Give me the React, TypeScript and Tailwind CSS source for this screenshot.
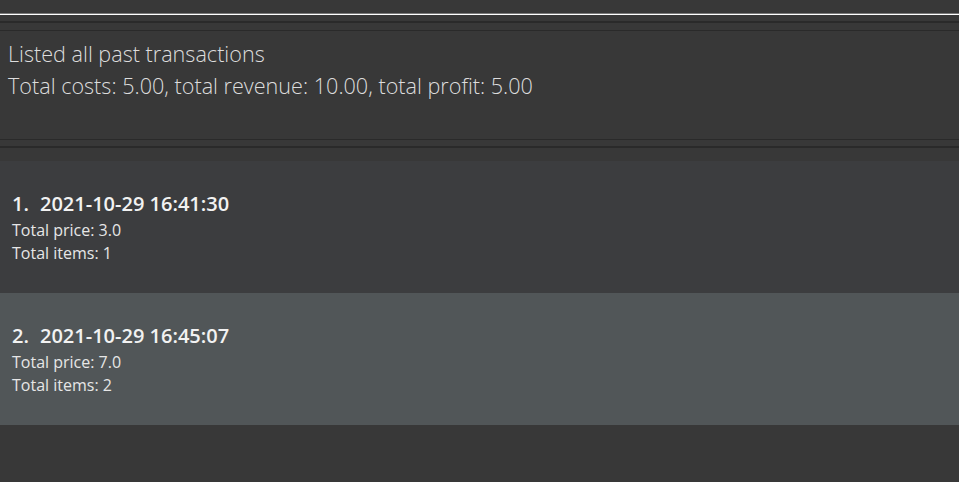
import React from "react";

const items = [
  { idx: 1, date: "2021-10-29 16:41:30", price: "3.0", count: "1", bg: "bg-[#3c3d3f]" },
  { idx: 2, date: "2021-10-29 16:45:07", price: "7.0", count: "2", bg: "bg-[#515658]" },
];

export default function App() {
  return (
    <div className="w-[959px] h-[482px] bg-[#383838] flex flex-col overflow-hidden" style={{ fontFamily: '"Open Sans", sans-serif' }}>
      <div className="h-[13px]" />
      <div className="h-px bg-[#7a7a7a]" />
      <div className="h-px bg-white" />
      <div className="h-[6px]" />
      <div className="h-[2px] bg-[#2a2a2a]" />
      <div className="h-[7px]" />
      <div className="h-px bg-[#2a2a2a]" />
      <div className="h-[108px] px-[8px] pt-[7px] text-[21.6px] leading-[32px] font-light text-[#dddddd]">
        <div>Listed all past transactions</div>
        <div>Total costs: 5.00, total revenue: 10.00, total profit: 5.00</div>
      </div>
      <div className="h-px bg-[#2a2a2a]" />
      <div className="h-[6px]" />
      <div className="h-[2px] bg-[#2a2a2a]" />
      <div className="h-[13px]" />
      {items.map((it) => (
        <div key={it.idx} className={`${it.bg} h-[132px] px-[12px] pt-[30px] text-white`}>
          <div className="flex text-[20px] font-semibold leading-[26px] text-[#f2f2f2]">
            <span className="w-[28px]">{it.idx}.</span>
            <span>{it.date}</span>
          </div>
          <div className="mt-[2px] text-[16px] leading-[23px] text-[#e6e6e6]">Total price: {it.price}</div>
          <div className="text-[16px] leading-[23px] text-[#e6e6e6]">Total items: {it.count}</div>
        </div>
      ))}
    </div>
  );
}
